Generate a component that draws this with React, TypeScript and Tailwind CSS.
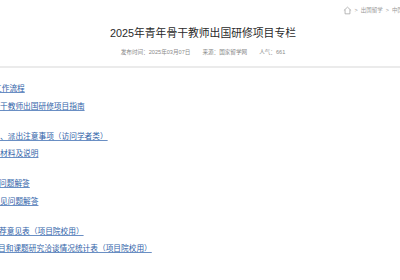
import React from "react";

const links: { text: string; cls: string }[] = [
  { text: "工作流程", cls: "-ml-[6px]" },
  { text: "干教师出国研修项目指南", cls: "ml-0" },
  { text: "", cls: "" },
  { text: "、派出注意事项（访问学者类）", cls: "ml-0" },
  { text: "材料及说明", cls: "ml-0" },
  { text: "", cls: "" },
  { text: "问题解答", cls: "-ml-[1px]" },
  { text: "见问题解答", cls: "ml-0" },
  { text: "", cls: "" },
  { text: "荐意见表（项目院校用）", cls: "-ml-[1px]" },
  { text: "目和课题研究洽谈情况统计表（项目院校用）", cls: "-ml-[2px]" },
];

export default function App() {
  return (
    <div
      className="w-[400px] h-[280px] overflow-hidden bg-white"
      style={{ fontFamily: '"Liberation Sans", "Noto Sans CJK SC", sans-serif' }}
    >
      {/* breadcrumb */}
      <div className="h-[20px] flex items-center justify-end gap-[3px] text-[5.5px] text-[#9a9a9a] -mr-[14px]">
        <svg width="9" height="9" viewBox="0 0 10 10" fill="none" stroke="#a8a8a8" strokeWidth="0.9">
          <path d="M1 5 L5 1.3 L9 5" />
          <path d="M2.3 4 V8.7 H7.7 V4" />
        </svg>
        <span>&gt;</span>
        <span>出国留学</span>
        <span>&gt;</span>
        <span>中国留学</span>
      </div>
      {/* title */}
      <div className="flex flex-col items-center pl-[6px]">
        <div className="mt-[6px] text-[10.8px] leading-[14px] text-[#2a2a2a]">
          2025年青年骨干教师出国研修项目专栏
        </div>
        <div className="mt-[8px] flex gap-[12px] text-[5.6px] leading-[8px] text-[#8a8a8a]">
          <span>发布时间：2025年03月07日</span>
          <span>来源：国家留学网</span>
          <span>人气：661</span>
        </div>
      </div>
      <div className="mt-[10px] h-[2px] bg-[#ebebeb]" />
      {/* links */}
      <div className="pt-[9px] flex flex-col">
        {links.map((l, i) =>
          l.text ? (
            <div key={i} className="h-[17.5px] leading-[17.5px] whitespace-nowrap">
              <span
                className={`${l.cls} inline-block text-[7.7px] text-[#2f62a8] underline decoration-[#6a8fc4] underline-offset-[1px]`}
              >
                {l.text}
              </span>
            </div>
          ) : (
            <div key={i} className="h-[12.5px]" />
          )
        )}
      </div>
    </div>
  );
}
